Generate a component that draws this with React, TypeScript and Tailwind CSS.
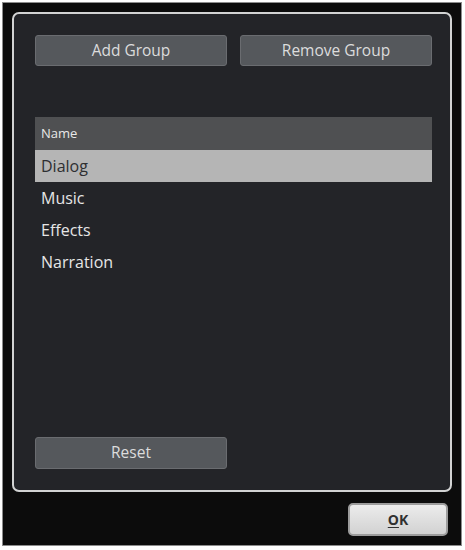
const groups = ['Dialog', 'Music', 'Effects', 'Narration']

const PanelButton = ({ label }: { label: string }) => (
    <button className="h-[31px] rounded-[3px] border border-[#6a6c70] bg-[#55585c] text-[15.5px] text-[#dcdcdc]">
        {label}
    </button>
)

export default function App() {
    return (
        <div className="h-[550px] w-[465px] bg-white pt-[2px] pl-[2px] font-['Open_Sans',sans-serif]">
            <div className="flex h-[544px] w-[460px] flex-col border border-[#8c8c8c] bg-[#0c0c0c] px-[9px] pt-[9px]">
                <div className="flex h-[480px] flex-col rounded-[7px] border-2 border-[#d2d3d3] bg-[#232428] pt-[21px] pr-[18px] pb-[21px] pl-[21px]">
                    <div className="grid grid-cols-2 gap-[13px]">
                        <PanelButton label="Add Group" />
                        <PanelButton label="Remove Group" />
                    </div>

                    <div className="mt-[51px] flex flex-col">
                        <div className="flex h-[33px] items-center bg-[#4f5052] px-[6px] text-[13px] text-[#e8e8e8]">Name</div>
                        {groups.map((name, i) => (
                            <div
                                key={name}
                                className={
                                    i === 0
                                        ? 'flex h-[32px] items-center bg-[#b5b5b5] px-[6px] text-[16px] text-[#2e2f31]'
                                        : 'flex h-[32px] items-center px-[6px] text-[16px] text-[#e6e6e6]'
                                }
                            >
                                {name}
                            </div>
                        ))}
                    </div>

                    <div className="flex-1" />

                    <div className="grid grid-cols-2 gap-[13px]">
                        <button className="h-[32px] rounded-[3px] border border-[#6a6c70] bg-[#55585c] text-[15.5px] text-[#dcdcdc]">
                            Reset
                        </button>
                    </div>
                </div>

                <div className="flex justify-end pt-[11px] pr-[4px]">
                    <button className="h-[33px] w-[100px] rounded-[5px] border-2 border-[#9c9c9c] bg-gradient-to-b from-[#ececec] to-[#d2d2d2] text-[14px] font-bold text-[#303030]">
                        <span className="underline underline-offset-2">O</span>K
                    </button>
                </div>
            </div>
        </div>
    )
}
